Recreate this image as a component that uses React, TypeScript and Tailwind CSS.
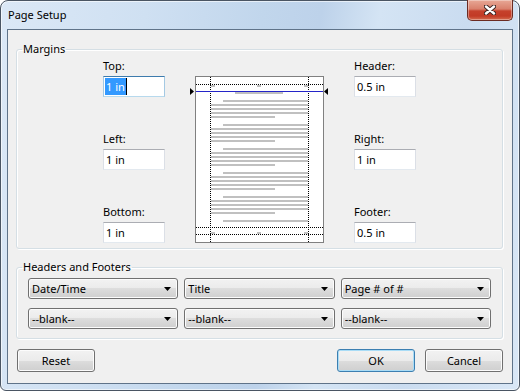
import type { ReactNode } from 'react'

type FieldProps = {
  value: string
  selected?: boolean
}

function Field({ value, selected = false }: FieldProps) {
  if (selected) {
    return (
      <div className="flex h-[21px] w-[62px] items-center border border-[#3d7bad] border-x-[#a4c9e3] border-b-[#b7d9ed] bg-white pl-[1px]">
        <span className="border-r border-black bg-[#3399ff] px-[1px] leading-[17px] text-white">{value}</span>
      </div>
    )
  }
  return (
    <div className="flex h-[21px] w-[62px] items-center border border-[#abadb3] border-x-[#dbdfe6] border-b-[#e3e9ef] bg-white pl-[2px]">
      <span>{value}</span>
    </div>
  )
}

function LabeledField({ label, value, selected }: FieldProps & { label: string }) {
  return (
    <div className="flex flex-col gap-[2px]">
      <span className="h-[16px]">{label}</span>
      <Field selected={selected} value={value} />
    </div>
  )
}

function Select({ value }: { value: string }) {
  return (
    <div className="flex h-[21px] items-center rounded-[3px] border border-[#707070] bg-[linear-gradient(#f2f2f2_0%,#ebebeb_50%,#dddddd_50%,#cfcfcf_100%)] pl-[3px] pr-[6px] shadow-[inset_0_0_0_1px_#fcfcfc]">
      <span className="flex-1 truncate">{value}</span>
      <svg height="4" width="7" viewBox="0 0 7 4">
        <path d="M0 0h7L3.5 4z" fill="#000" />
      </svg>
    </div>
  )
}

function Button({ children, primary = false }: { children: ReactNode; primary?: boolean }) {
  return (
    <button
      className={
        primary
          ? 'h-[23px] w-[78px] rounded-[3px] border border-[#3c7fb1] bg-[linear-gradient(#f2f2f2_0%,#ebebeb_50%,#dddddd_50%,#cfcfcf_100%)] shadow-[inset_0_0_0_1px_#a9dcf6]'
          : 'h-[23px] w-[78px] rounded-[3px] border border-[#707070] bg-[linear-gradient(#f2f2f2_0%,#ebebeb_50%,#dddddd_50%,#cfcfcf_100%)] shadow-[inset_0_0_0_1px_#fcfcfc]'
      }
      type="button"
    >
      {children}
    </button>
  )
}

function PagePreview() {
  const paragraphs = [24, 48, 72, 96, 120]
  const marks = [16, 62, 109]
  return (
    <svg className="mt-[18px] shrink-0 overflow-visible" height="167" width="129" viewBox="0 0 129 167">
      <rect fill="#fff" height="166" stroke="#808080" width="128" x="0.5" y="0.5" />
      {marks.map((x) => (
        <g key={x} fill="#c0c0c0">
          <rect height="2" width="4" x={x} y="9" />
          <rect height="2" width="4" x={x} y="156" />
        </g>
      ))}
      <rect fill="#c0c0c0" height="2" width="48" x="40" y="16" />
      {paragraphs.map((y) => (
        <g key={y} fill="#c0c0c0">
          <rect height="2" width="85" x="28" y={y} />
          <rect height="2" width="97" x="16" y={y + 4} />
          <rect height="2" width="97" x="16" y={y + 8} />
          <rect height="2" width="97" x="16" y={y + 12} />
          <rect height="2" width="64" x="16" y={y + 16} />
        </g>
      ))}
      <rect fill="#c0c0c0" height="2" width="85" x="28" y="144" />
      <g stroke="#000" strokeDasharray="1 1">
        <path d="M1 8.5H128M1 151.5H128M1 158.5H128" />
        <path d="M15.5 1V166M113.5 1V166" />
      </g>
      <path d="M1 15.5H128" stroke="#2424c8" />
      <path d="M-5 12L-1 15.5L-5 19z" fill="#000" />
      <path d="M133 12L129 15.5L133 19z" fill="#000" />
    </svg>
  )
}

function App() {
  return (
    <div className="h-[391px] w-[520px] bg-white font-['Noto_Sans',sans-serif] text-[11px] leading-[16px] text-black">
      <div className="relative flex h-full flex-col rounded-t-[8px] rounded-b-[6px] border border-[#4a5563] bg-[linear-gradient(100deg,#dbe8f6_0%,#cfe0f2_25%,#c1d6ec_45%,#bdd2ea_55%,#d4e4f4_65%,#cadcf0_80%,#d9e7f6_100%)] px-[6px] pb-[6px] shadow-[inset_0_0_0_1px_rgba(255,255,255,0.6)]">
        <div className="flex h-[28px] items-center pl-[1px]">Page Setup</div>
        <button
          aria-label="Close"
          className="absolute -top-px right-[6px] flex h-[21px] w-[46px] items-center justify-center rounded-b-[5px] border border-t-0 border-[#6b2b22] bg-[linear-gradient(#e8a896_0%,#d9806c_45%,#c5412c_55%,#c23a25_80%,#d46c50_100%)] shadow-[inset_0_0_0_1px_rgba(255,255,255,0.35)]"
          type="button"
        >
          <svg height="10" width="12" viewBox="0 0 12 10">
            <path d="M2 1.5L10 8.5M10 1.5L2 8.5" stroke="#3b2422" strokeLinecap="round" strokeWidth="4.4" />
            <path d="M2 1.5L10 8.5M10 1.5L2 8.5" stroke="#fff" strokeLinecap="round" strokeWidth="2.4" />
          </svg>
        </button>
        <div className="flex flex-1 flex-col border border-[#5f7389] bg-[#f0f0f0] pl-[8px] pr-[9px] pt-[11px]">
          <fieldset className="rounded-[3px] border border-[#d5dfe5] shadow-[inset_1px_1px_0_#fff,1px_1px_0_#fff]">
            <legend className="ml-[5px] px-[1px]">Margins</legend>
            <div className="flex justify-center gap-[30px] pb-[5px] pt-[1px]">
              <div className="flex flex-col gap-[34px]">
                <LabeledField label="Top:" selected value="1 in" />
                <LabeledField label="Left:" value="1 in" />
                <LabeledField label="Bottom:" value="1 in" />
              </div>
              <PagePreview />
              <div className="flex flex-col gap-[34px]">
                <LabeledField label="Header:" value="0.5 in" />
                <LabeledField label="Right:" value="1 in" />
                <LabeledField label="Footer:" value="0.5 in" />
              </div>
            </div>
          </fieldset>
          <fieldset className="mt-[10px] rounded-[3px] border border-[#d5dfe5] shadow-[inset_1px_1px_0_#fff,1px_1px_0_#fff]">
            <legend className="ml-[5px] px-[1px]">Headers and Footers</legend>
            <div className="grid grid-cols-3 gap-x-[6px] gap-y-[9px] px-[11px] pb-[9px] pt-[3px]">
              <Select value="Date/Time" />
              <Select value="Title" />
              <Select value="Page # of #" />
              <Select value="--blank--" />
              <Select value="--blank--" />
              <Select value="--blank--" />
            </div>
          </fieldset>
          <div className="mt-[10px] flex gap-[10px] pl-[1px]">
            <Button>Reset</Button>
            <div className="flex-1" />
            <Button primary>OK</Button>
            <Button>Cancel</Button>
          </div>
        </div>
      </div>
    </div>
  )
}

export default App
